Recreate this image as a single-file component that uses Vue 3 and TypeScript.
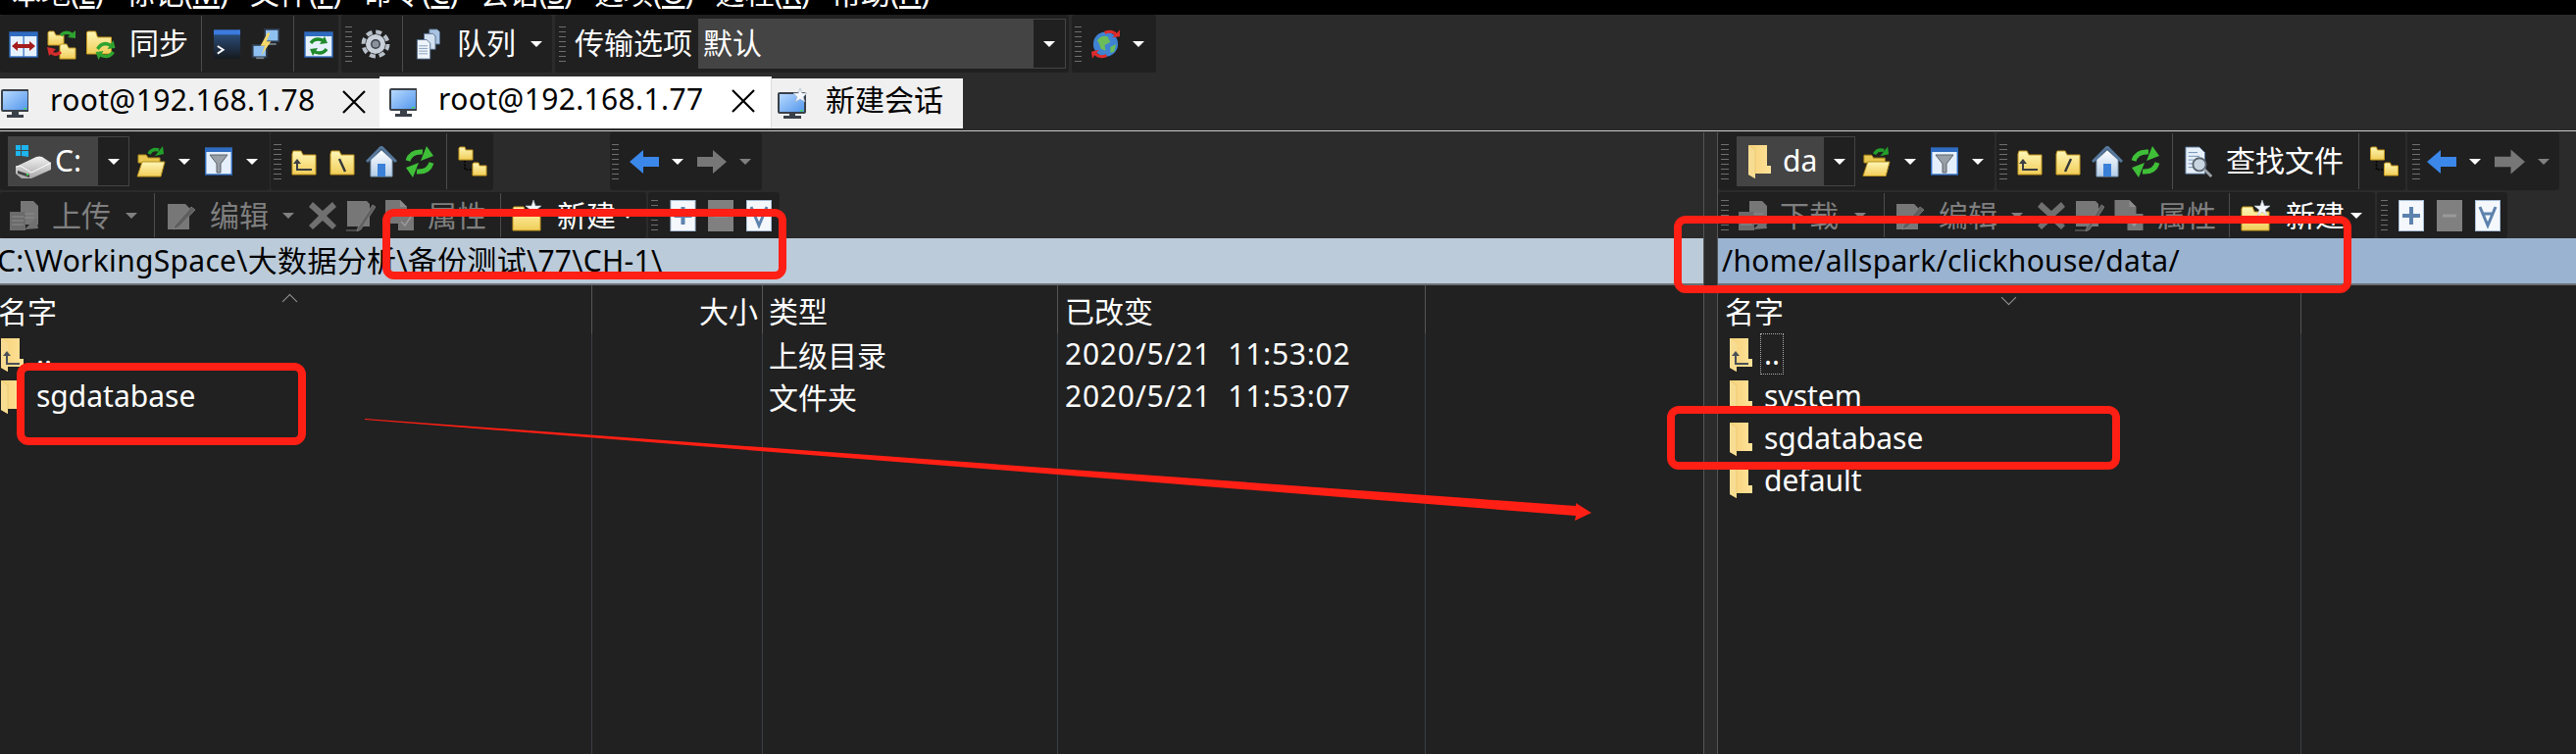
<script setup lang="ts">
type Item = {
  k: 'grip' | 'sep' | 'caret' | 'icon' | 'text' | 'combo'
  m: number
  w?: number
  n?: string
  t?: string
  off?: boolean
  im?: number
  iw?: number
  tm?: number
  light?: number
}
type Band = { m: number; w: number; items: Item[] }

const g = (m: number, w = 7): Item => ({ k: 'grip', m, w })
const s = (m: number): Item => ({ k: 'sep', m, w: 1 })
const c = (m: number, off = false): Item => ({ k: 'caret', m, w: 12, off })
const i = (m: number, n: string, w = 30): Item => ({ k: 'icon', m, n, w })
const t = (m: number, text: string, w: number, off = false): Item => ({ k: 'text', m, t: text, w, off })

const top: Band[] = [
  { m: 0, w: 345, items: [i(9, 'panes'), i(9, 'syncfolders'), i(9, 'syncfolder', 31), t(14, '同步', 59), s(14), i(11, 'term', 29), i(9, 'bolt', 32), s(12), i(10, 'syncpanes')] },
  { m: 3, w: 215, items: [g(4), i(9, 'gear'), s(12), i(12, 'docs', 27), t(16, '队列', 58), c(17)] },
  { m: 3, w: 524, items: [g(4), t(9, '传输选项', 116), { k: 'combo', m: 10, w: 375, light: 341, t: '默认', tm: 5 }] },
  { m: 3, w: 86, items: [g(3), i(10, 'globe', 29), c(13)] },
]
const leftA: Band[] = [
  { m: 0, w: 275, items: [{ k: 'combo', m: 8, w: 124, light: 91, t: 'C:', n: 'drive', im: 7, iw: 37, tm: 4 }, i(7, 'folderopen'), c(13), i(15, 'filter', 28), c(14)] },
  { m: 1, w: 227, items: [g(3, 8), i(10, 'upfolder', 26), i(13, 'rootback', 26), i(11, 'home', 32), i(8, 'refresh'), s(12), i(11, 'tree')] },
  { m: 119, w: 155, items: [g(2), i(11, 'back'), c(13), i(14, 'forward'), c(13, true)] },
]
const leftB: Band[] = [
  { m: 0, w: 659, items: [i(9, 'updoc'), t(14, '上传', 60, true), c(15, true), s(17), i(12, 'edit', 29), t(15, '编辑', 59, true), c(15, true), i(15, 'cross', 28), i(10, 'rename'), i(9, 'prop'), t(14, '属性', 60, true), s(14), i(11, 'newfolder'), t(16, '新建', 60), c(6)] },
  { m: 2, w: 134, items: [g(3), i(12, 'plus', 27), i(12, 'minus', 26), i(13, 'all', 26)] },
]
const rightA: Band[] = [
  { m: 0, w: 282, items: [g(3, 8), { k: 'combo', m: 8, w: 121, light: 88, t: 'da', n: 'wfolder', im: 12, iw: 23, tm: 12 }, i(7, 'folderopen', 29), c(14), i(15, 'filter', 28), c(14)] },
  { m: 2, w: 417, items: [g(3, 8), i(10, 'upfolder', 26), i(13, 'rootslash', 26), i(11, 'home', 32), i(8, 'refresh'), s(12), i(11, 'find', 31), t(12, '查找文件', 120), s(15), i(10, 'tree', 31)] },
  { m: 2, w: 155, items: [g(5, 8), i(7, 'back'), c(13), i(14, 'forward', 31), c(13, true)] },
]
const rightB: Band[] = [
  { m: 0, w: 670, items: [g(3, 8), i(9, 'updoc'), t(13, '下载', 62, true), c(14, true), s(18), i(11, 'edit', 29), t(15, '编辑', 60, true), c(14, true), i(15, 'cross', 28), i(10, 'rename'), i(9, 'prop', 31), t(14, '属性', 60, true), s(13), i(11, 'newfolder'), t(16, '新建', 61), c(5)] },
  { m: 2, w: 133, items: [g(4), i(11, 'plus', 26), i(13, 'minus', 26), i(13, 'all', 26)] },
]
const rows = [
  { name: '..', up: true, type: '上级目录', date: '2020/5/21  11:53:02' },
  { name: 'sgdatabase', up: false, type: '文件夹', date: '2020/5/21  11:53:07' },
]
const remote = [
  { name: '..', up: true },
  { name: 'system', up: false },
  { name: 'sgdatabase', up: false },
  { name: 'default', up: false },
]
const menus = [
  { a: '本地', u: 'L' }, { a: '标记', u: 'M' }, { a: '文件', u: 'F' }, { a: '命令', u: 'C' },
  { a: '会话', u: 'S' }, { a: '选项', u: 'O' }, { a: '远程', u: 'R' }, { a: '帮助', u: 'H' },
]
const rowsOf = (a: Band[], b: Band[]) => [
  { cls: 'tall', bands: a },
  { cls: 'short', bands: b },
]
const panes = [
  { cls: 'local', rows: rowsOf(leftA, leftB) },
  { cls: 'remote', rows: rowsOf(rightA, rightB) },
]
const px = (n?: number) => (n === undefined ? undefined : `${n}px`)
</script>

<template>
  <div class="app">
    <svg class="defs" aria-hidden="true">
      <defs>
        <linearGradient id="fy" x1="0" y1="0" x2="0" y2="1"><stop offset="0" stop-color="#fff7b8" /><stop offset="1" stop-color="#f0cd58" /></linearGradient>
        <linearGradient id="fw" x1="0" y1="0" x2="1" y2="0"><stop offset="0" stop-color="#f5d27a" /><stop offset="1" stop-color="#ffe298" /></linearGradient>
        <linearGradient id="scr" x1="0" y1="0" x2="1" y2="1"><stop offset="0" stop-color="#bcdcff" /><stop offset="1" stop-color="#4f94ec" /></linearGradient>
        <linearGradient id="trm" x1="0" y1="0" x2="0" y2="1"><stop offset="0" stop-color="#2f5688" /><stop offset="1" stop-color="#161a20" /></linearGradient>
        <linearGradient id="hm" x1="0" y1="0" x2="0" y2="1"><stop offset="0" stop-color="#ffffff" /><stop offset="1" stop-color="#b5cde8" /></linearGradient>
        <linearGradient id="dr" x1="0" y1="0" x2="0" y2="1"><stop offset="0" stop-color="#f2f2f2" /><stop offset="1" stop-color="#a8a8a8" /></linearGradient>
      </defs>
      <symbol id="panes" viewBox="0 0 30 30">
        <rect x="1" y="3" width="28" height="25" fill="#e6f1fc" stroke="#2f6cc0" stroke-width="1.4" />
        <rect x="1" y="3" width="28" height="4" fill="#2f6cc0" /><rect x="14.5" y="3" width="1.2" height="25" fill="#2f6cc0" />
        <path d="M3 17 L9 12 V15 H21 V12 L27 17 L21 22 V19 H9 V22Z" fill="#a51c1c" />
      </symbol>
      <symbol id="syncfolders" viewBox="0 0 30 32">
        <path d="M1 4 V17 H17 V7 H9 L7 3 H2Z" fill="url(#fy)" stroke="#c79a1e" />
        <path d="M13 18 V31 H29 V20 H22 L20 16 H14Z" fill="url(#fy)" stroke="#c79a1e" />
        <path d="M14 7 Q19 2 25 6" fill="none" stroke="#2fa32f" stroke-width="3.5" /><path d="M21 9 L29 10 V2Z" fill="#2fa32f" />
        <path d="M14 24 Q8 29 4 24" fill="none" stroke="#d62c2c" stroke-width="3.5" /><path d="M0 19 L9 21 L2 28Z" fill="#d62c2c" />
      </symbol>
      <symbol id="syncfolder" viewBox="0 0 30 32">
        <path d="M1 4 V26 H26 V9 H12 L10 3 H2Z" fill="url(#fy)" stroke="#c79a1e" />
        <path d="M12 21 Q17 13 25 17" fill="none" stroke="#2fa32f" stroke-width="3.5" /><path d="M22 21 L30 20 L28 12Z" fill="#2fa32f" />
        <path d="M28 24 Q23 31 15 27" fill="none" stroke="#2fa32f" stroke-width="3.5" /><path d="M18 23 L10 24 L13 32Z" fill="#2fa32f" />
      </symbol>
      <symbol id="term" viewBox="0 0 30 32">
        <rect x="1" y="1" width="28" height="30" fill="url(#trm)" /><rect x="1" y="1" width="28" height="5" fill="#3b7be0" />
        <path d="M5 18 L11 22 L5 26" fill="none" stroke="#fff" stroke-width="2" />
      </symbol>
      <symbol id="bolt" viewBox="0 0 32 36">
        <rect x="15" y="1" width="16" height="14" fill="#8fc0f2" stroke="#2d3a4c" stroke-width="2" /><rect x="19" y="17" width="9" height="2" fill="#75808c" />
        <rect x="1" y="19" width="16" height="14" fill="#8fc0f2" stroke="#2d3a4c" stroke-width="2" /><rect x="5" y="33" width="9" height="2" fill="#75808c" />
        <path d="M18 5 L10 20 H15 L11 31 L22 15 H17 L21 5Z" fill="#f5d76a" />
      </symbol>
      <symbol id="syncpanes" viewBox="0 0 30 30">
        <rect x="1" y="3" width="28" height="25" fill="#e6f1fc" stroke="#2f6cc0" stroke-width="1.4" />
        <rect x="1" y="3" width="28" height="4" fill="#2f6cc0" />
        <path d="M7 14 Q11 8 19 11" fill="none" stroke="#1f8a2a" stroke-width="3.4" /><path d="M16 15 L24 14 L21 7Z" fill="#1f8a2a" />
        <path d="M23 20 Q19 26 11 23" fill="none" stroke="#1f8a2a" stroke-width="3.4" /><path d="M14 19 L6 20 L9 27Z" fill="#1f8a2a" />
      </symbol>
      <symbol id="gear" viewBox="0 0 30 32">
        <circle cx="15" cy="16" r="12.5" fill="none" stroke="#b8c0ca" stroke-width="4" stroke-dasharray="6 3.8" />
        <circle cx="15" cy="16" r="10" fill="#c9d0d9" /><circle cx="15" cy="16" r="5" fill="#3a3f46" /><circle cx="15" cy="16" r="3.6" fill="#8a929c" />
      </symbol>
      <symbol id="docs" viewBox="0 0 27 36">
        <path d="M15 1 H24 L27 4 V18 H15Z" fill="#a9c3e0" stroke="#4e6a8c" /><path d="M9 6 H19 L22 9 V24 H9Z" fill="#d3e1f0" stroke="#4e6a8c" />
        <path d="M1 13 H12 L16 17 V35 H1Z" fill="#eef4fa" stroke="#4e6a8c" />
        <path d="M3 20 H13 M3 23 H13 M3 26 H13 M3 29 H13" stroke="#7e98b8" />
      </symbol>
      <symbol id="globe" viewBox="0 0 30 32">
        <circle cx="15" cy="16" r="13" fill="#3f83d2" />
        <path d="M6 12 Q11 6 17 8 L20 14 L14 17 L15 23 L10 21 L8 15Z M20 19 L26 16 L24 24 L20 25Z" fill="#6bbd5a" />
        <path d="M14 4 Q22 1 26 6" fill="none" stroke="#e02c2c" stroke-width="3" /><path d="M22 9 L31 8 L30 1Z" fill="#e02c2c" />
        <path d="M16 28 Q8 31 4 26" fill="none" stroke="#e02c2c" stroke-width="3" /><path d="M8 22 L0 24 L1 31Z" fill="#e02c2c" />
      </symbol>
      <symbol id="drive" viewBox="0 0 37 34">
        <path d="M1 0 L6 0 V5 H1Z M7 0 L14 -1 V5 H7Z M1 6 H6 V11 H1Z M7 6 H14 V12 L7 11Z" fill="#1eb4ee" />
        <path d="M1 22 L22 12 Q25 11 28 12 L37 18 V25 L17 34 H7 L1 29Z" fill="url(#dr)" />
        <path d="M1 22 Q6 20 9 23 L17 28 L37 18" fill="none" stroke="#fff" stroke-width="1" />
        <path d="M3 26 L15 30 V33 L3 29Z" fill="#444" /><rect x="12" y="29" width="2" height="2" fill="#3bd04a" />
      </symbol>
      <symbol id="wfolder" viewBox="0 0 23 34" preserveAspectRatio="none">
        <path d="M0 0 H19 V21 H23 V29 H7 V34 L0 30Z" fill="url(#fw)" />
        <path d="M0 0 L7 5 V34 L0 30Z" fill="#f7dc92" /><path d="M7 29 V5 L0 0" fill="none" stroke="#e8c26c" stroke-width=".6" />
      </symbol>
      <symbol id="wfolderup" viewBox="0 0 23 34" preserveAspectRatio="none">
        <path d="M0 0 H19 V21 H23 V29 H7 V34 L0 30Z" fill="url(#fw)" />
        <path d="M0 0 L7 5 V34 L0 30Z" fill="#f7dc92" />
        <path d="M6 17 V26 H19" fill="none" stroke="#4a4f58" stroke-width="2" /><path d="M2 18 L6 13 L10 18Z" fill="#4a4f58" />
      </symbol>
      <symbol id="folderopen" viewBox="0 0 30 32">
        <path d="M2 9 H10 L12 12 H24 V17 H2Z" fill="#e8c850" stroke="#b8901c" />
        <path d="M6 16 H29 L25 31 H1Z" fill="url(#fy)" stroke="#b8901c" />
        <path d="M13 8 Q16 2 23 4" fill="none" stroke="#23a02a" stroke-width="3.6" /><path d="M19 10 L28 8 L27 0Z" fill="#23a02a" />
      </symbol>
      <symbol id="filter" viewBox="0 0 28 30">
        <rect x=".7" y="1" width="26.6" height="27" fill="#e6f0fc" stroke="#2f6cc0" stroke-width="1.4" /><rect x=".7" y="1" width="26.6" height="4" fill="#2f6cc0" />
        <path d="M5 8 H23 L16 17 V26 H12 V17Z" fill="#9aa0a8" stroke="#5d6369" />
      </symbol>
      <symbol id="upfolder" viewBox="0 0 26 30">
        <path d="M1 7 V28 H25 V8 H12 L10 4 H2Z" fill="url(#fy)" stroke="#c79a1e" />
        <path d="M6 16 V23 H21" fill="none" stroke="#3c3f44" stroke-width="2" /><path d="M2 17 L6 12 L10 17Z" fill="#3c3f44" />
      </symbol>
      <symbol id="rootback" viewBox="0 0 26 30">
        <path d="M1 7 V28 H25 V8 H12 L10 4 H2Z" fill="url(#fy)" stroke="#c79a1e" />
        <path d="M10 12 L16 25" fill="none" stroke="#33363a" stroke-width="2.4" />
      </symbol>
      <symbol id="rootslash" viewBox="0 0 26 30">
        <path d="M1 7 V28 H25 V8 H12 L10 4 H2Z" fill="url(#fy)" stroke="#c79a1e" />
        <path d="M16 12 L10 25" fill="none" stroke="#33363a" stroke-width="2.4" />
      </symbol>
      <symbol id="home" viewBox="0 0 32 32">
        <path d="M5 14 V31 H27 V14 L16 4Z" fill="url(#hm)" stroke="#7c9ab8" />
        <path d="M1 16 L16 1 L31 16" fill="none" stroke="#56789c" stroke-width="3" />
        <rect x="12" y="18" width="8" height="13" fill="#3a80d8" />
      </symbol>
      <symbol id="refresh" viewBox="0 0 30 32">
        <path d="M3 15 Q6 5 18 6" fill="none" stroke="#3fbf38" stroke-width="5" /><path d="M16 15 L29 10 L22 0Z" fill="#3fbf38" />
        <path d="M27 17 Q24 27 12 26" fill="none" stroke="#3fbf38" stroke-width="5" /><path d="M14 17 L1 22 L8 32Z" fill="#3fbf38" />
      </symbol>
      <symbol id="tree" viewBox="0 0 30 32">
        <path d="M1 2 V14 H15 V4 H8 L7 1 H2Z" fill="url(#fy)" stroke="#c79a1e" />
        <path d="M15 18 V30 H29 V20 H22 L21 17 H16Z" fill="url(#fy)" stroke="#c79a1e" />
        <path d="M7 15 V24 H14" fill="none" stroke="#000" stroke-width="1.6" stroke-dasharray="2 1.4" />
      </symbol>
      <symbol id="find" viewBox="0 0 31 34">
        <path d="M1 1 H16 L22 7 V30 H1Z" fill="#e6f0fa" stroke="#4e6a8c" />
        <path d="M4 7 H14 M4 11 H16 M4 15 H10 M4 19 H9 M4 23 H10" stroke="#6f8cb0" />
        <circle cx="16" cy="20" r="7" fill="#c9d6e2" stroke="#5b6570" stroke-width="2" /><path d="M21 25 L29 33" stroke="#9aa2aa" stroke-width="3" />
      </symbol>
      <symbol id="back" viewBox="0 0 30 30"><path d="M0 15 L14 3 V10 H30 V20 H14 V27Z" fill="#3b87ea" /></symbol>
      <symbol id="forward" viewBox="0 0 30 30"><path d="M30 15 L16 3 V10 H0 V20 H16 V27Z" fill="#777" /></symbol>
      <symbol id="updoc" viewBox="0 0 30 32">
        <path d="M12 1 H25 L30 6 V25 H12Z" fill="#777" /><path d="M1 12 H17 V31 H1Z" fill="#6b6b6b" />
        <path d="M16 14 H26 M16 18 H26 M3 17 H15 M3 21 H15 M3 25 H15" stroke="#8c8c8c" />
        <path d="M16 30 L28 18 L30 29 Z" fill="#707070" />
      </symbol>
      <symbol id="edit" viewBox="0 0 29 30">
        <path d="M1 3 H19 L23 7 V29 H1Z" fill="#777" />
        <path d="M8 25 L25 6 L29 9 L12 27 L7 29Z" fill="#5f5f5f" stroke="#8a8a8a" stroke-width=".7" />
      </symbol>
      <symbol id="cross" viewBox="0 0 28 30">
        <path d="M4 1 L14 10 L24 1 L28 6 L18 15 L28 25 L24 29 L14 20 L4 29 L0 25 L10 15 L0 6Z" fill="#707070" />
      </symbol>
      <symbol id="rename" viewBox="0 0 30 32">
        <path d="M1 1 H21 L24 4 V27 H1Z" fill="#777" />
        <path d="M12 28 L27 5 L30 7 L15 30 L11 32Z" fill="#606060" stroke="#8a8a8a" stroke-width=".7" /><path d="M0 31 H12" stroke="#777" />
      </symbol>
      <symbol id="prop" viewBox="0 0 30 32">
        <path d="M1 0 H16 L23 7 V14 H30 V31 H14 V24 H1Z" fill="#777" />
        <path d="M17 22 L21 26 L27 17" fill="none" stroke="#999" stroke-width="1.6" /><path d="M16 0 V7 H23" fill="#8c8c8c" />
      </symbol>
      <symbol id="newfolder" viewBox="0 0 30 32">
        <path d="M1 9 V31 H29 V12 H14 L12 7 H2Z" fill="url(#fy)" stroke="#c79a1e" />
        <path d="M22 0 L24 6 L30 6 L25 10 L27 16 L22 12 L17 16 L19 10 L14 6 L20 6Z" fill="#f4f7fb" stroke="#b7c6da" stroke-width=".6" />
      </symbol>
      <symbol id="plus" viewBox="0 0 26 32"><rect x=".5" y=".5" width="25" height="31" fill="#f4f8fc" stroke="#a9bfd8" /><path d="M13 7 V25 M4 16 H22" stroke="#5d82ad" stroke-width="4" /></symbol>
      <symbol id="minus" viewBox="0 0 26 32"><rect width="26" height="32" fill="#808080" /><path d="M6 16 H20" stroke="#999" stroke-width="3" /></symbol>
      <symbol id="all" viewBox="0 0 26 32"><rect x=".5" y=".5" width="25" height="31" fill="#f4f8fc" stroke="#a9bfd8" /><path d="M5 7 L13 26 L21 7 M8 14 H18" fill="none" stroke="#5d82ad" stroke-width="3" /></symbol>
      <symbol id="monitor" viewBox="0 0 28 30">
        <rect x="1" y="1" width="27" height="21" rx="1" fill="url(#scr)" stroke="#3a4048" stroke-width="2" />
        <rect x="23" y="19" width="3" height="1.5" fill="#47d65a" />
        <rect x="11" y="23" width="7" height="3" fill="#3a4048" /><rect x="6" y="26" width="17" height="3" fill="#3a4048" />
      </symbol>
      <symbol id="monitornew" viewBox="0 0 30 32">
        <rect x="1" y="5" width="27" height="20" rx="1" fill="url(#scr)" stroke="#3a4048" stroke-width="2" />
        <rect x="23" y="22" width="3" height="1.5" fill="#47d65a" />
        <rect x="12" y="26" width="6" height="2" fill="#3a4048" /><rect x="6" y="28" width="18" height="3" fill="#3a4048" />
        <path d="M23 0 L25 5 L30 5 L26 9 L28 14 L23 11 L18 14 L20 9 L16 5 L21 5Z" fill="#f4f7fb" stroke="#9fb0c4" stroke-width=".6" />
      </symbol>
      <symbol id="close" viewBox="0 0 24 24"><path d="M1 1 L23 23 M23 1 L1 23" fill="none" stroke="#000" stroke-width="2.2" /></symbol>
    </svg>

    <div class="menu"><div class="menu-in"><span v-for="m in menus" :key="m.u">{{ m.a }}(<u>{{ m.u }}</u>)</span></div></div>

    <div class="band-row top">
      <div v-for="(b, bi) in top" :key="bi" class="band" :style="{ marginLeft: px(b.m), width: px(b.w) }">
        <template v-for="(it, ii) in b.items" :key="ii">
          <span v-if="it.k === 'grip'" class="grip" :style="{ marginLeft: px(it.m), width: px(it.w) }"></span>
          <span v-else-if="it.k === 'sep'" class="sep" :style="{ marginLeft: px(it.m) }"></span>
          <span v-else-if="it.k === 'caret'" class="caret" :class="{ off: it.off }" :style="{ marginLeft: px(it.m) }"></span>
          <svg v-else-if="it.k === 'icon'" class="ic" :style="{ marginLeft: px(it.m), width: px(it.w) }"><use :href="'#' + it.n" /></svg>
          <span v-else-if="it.k === 'text'" class="tx" :class="{ off: it.off }" :style="{ marginLeft: px(it.m), width: px(it.w) }">{{ it.t }}</span>
          <div v-else class="combo" :style="{ marginLeft: px(it.m), width: px(it.w) }">
            <div class="combo-main" :style="{ width: px(it.light) }"><span class="tx" :style="{ marginLeft: px(it.tm) }">{{ it.t }}</span></div>
            <div class="combo-drop"><span class="caret"></span></div>
          </div>
        </template>
      </div>
    </div>

    <div class="tabs">
      <div class="tab t1"><svg class="mon"><use href="#monitor" /></svg><span class="tab-t">root@192.168.1.78</span><svg class="x"><use href="#close" /></svg></div>
      <div class="tab t2"><svg class="mon"><use href="#monitor" /></svg><span class="tab-t">root@192.168.1.77</span><svg class="x"><use href="#close" /></svg></div>
      <div class="tab t3"><svg class="mon new"><use href="#monitornew" /></svg><span class="tab-t">新建会话</span></div>
    </div>
    <div class="rule"></div>

    <div class="split">
      <section v-for="p in panes" :key="p.cls" class="pane" :class="p.cls">
        <div v-for="r in p.rows" :key="r.cls" class="band-row" :class="r.cls">
          <div v-for="(b, bi) in r.bands" :key="bi" class="band" :style="{ marginLeft: px(b.m), width: px(b.w) }">
            <template v-for="(it, ii) in b.items" :key="ii">
              <span v-if="it.k === 'grip'" class="grip" :style="{ marginLeft: px(it.m), width: px(it.w) }"></span>
              <span v-else-if="it.k === 'sep'" class="sep" :style="{ marginLeft: px(it.m) }"></span>
              <span v-else-if="it.k === 'caret'" class="caret" :class="{ off: it.off }" :style="{ marginLeft: px(it.m) }"></span>
              <svg v-else-if="it.k === 'icon'" class="ic" :style="{ marginLeft: px(it.m), width: px(it.w) }"><use :href="'#' + it.n" /></svg>
              <span v-else-if="it.k === 'text'" class="tx" :class="{ off: it.off }" :style="{ marginLeft: px(it.m), width: px(it.w) }">{{ it.t }}</span>
              <div v-else class="combo" :style="{ marginLeft: px(it.m), width: px(it.w) }">
                <div class="combo-main" :style="{ width: px(it.light) }">
                  <svg class="ic combo-ic" :style="{ marginLeft: px(it.im), width: px(it.iw) }"><use :href="'#' + it.n" /></svg>
                  <span class="tx" :style="{ marginLeft: px(it.tm) }">{{ it.t }}</span>
                </div>
                <div class="combo-drop"><span class="caret"></span></div>
              </div>
            </template>
          </div>
        </div>

        <template v-if="p.cls === 'local'">
          <div class="path"><span class="path-t">C:\WorkingSpace\大数据分析\备份测试\77\CH-1\</span></div>
          <div class="thead">
            <div class="col c-name"><span class="hname">名字</span><i class="chev up"></i></div>
            <div class="col c-size"><span>大小</span></div>
            <div class="col c-type"><span>类型</span></div>
            <div class="col c-date"><span>已改变</span></div>
            <div class="col c-rest"></div>
          </div>
          <div class="tbody">
            <div class="rowlines">
              <div class="col c-name"></div><div class="col c-size"></div><div class="col c-type"></div><div class="col c-date"></div>
            </div>
            <div v-for="r in rows" :key="r.name" class="row">
              <div class="cell c-name">
                <svg class="fold"><use :href="r.up ? '#wfolderup' : '#wfolder'" /></svg><span class="nm">{{ r.name }}</span>
              </div>
              <div class="cell c-size"></div>
              <div class="cell c-type">{{ r.type }}</div>
              <div class="cell c-date"><span class="date">{{ r.date }}</span></div>
            </div>
          </div>
        </template>

        <template v-else>
          <div class="path"><span class="path-t">/home/allspark/clickhouse/data/</span></div>
          <div class="thead">
            <div class="col c-rname"><span>名字</span><i class="chev down"></i></div>
            <div class="col c-rest"></div>
          </div>
          <div class="tbody">
            <div class="rowlines"><div class="col c-rname"></div></div>
            <div v-for="r in remote" :key="r.name" class="row">
              <div class="cell c-rname">
                <svg class="fold"><use :href="r.up ? '#wfolderup' : '#wfolder'" /></svg><span class="nm" :class="{ focus: r.up }">{{ r.name }}</span>
              </div>
            </div>
          </div>
        </template>
      </section>
    </div>

    <div class="mark m1"></div>
    <div class="mark m2"></div>
    <div class="mark m3"></div>
    <div class="mark m4"></div>
    <svg class="arrow" viewBox="0 0 2627 769"><polygon points="372,427 1607,516 1607,513 1623,523 1606,531 1607,526 372,428" fill="#ff1f14" /></svg>
  </div>
</template>

<style>
html, body { margin: 0; background: #2b2b2b; overflow: hidden; }
</style>

<style scoped>
.app {
  position: relative;
  width: 2627px;
  height: 769px;
  overflow: hidden;
  background: #2b2b2b;
  color: #fff;
  font-family: "Noto Sans", "Noto Sans CJK SC", sans-serif;
  font-size: 30px;
}
.defs { position: absolute; width: 0; height: 0; }
.menu { height: 15px; background: #000; overflow: hidden; }
.menu-in { display: flex; gap: 22px; padding-left: 12px; margin-top: -27px; font-size: 30px; line-height: 40px; white-space: nowrap; }
.band-row { display: flex; }
.band-row.top { height: 59px; }
.band-row.tall { height: 59px; margin-bottom: 2px; }
.band-row.short { height: 47px; }
.band { display: flex; align-items: center; background: #202020; border-radius: 3px; flex: none; box-sizing: border-box; }
.grip { flex: none; height: 36px; background: repeating-linear-gradient(#6e6e6e 0 1px, transparent 1px 5px); }
.short .grip { height: 31px; }
.sep { flex: none; width: 1px; align-self: stretch; margin: 1px 0; background: #4c4c4c; }
.caret { flex: none; width: 0; height: 0; border-left: 6px solid transparent; border-right: 6px solid transparent; border-top: 6px solid #fff; }
.caret.off { border-top-color: #808080; }
.ic { flex: none; height: 32px; display: block; }
.tx { flex: none; white-space: nowrap; line-height: 40px; margin-bottom: 2px; }
.tx.off { color: #7f7f7f; }
.short .tx { margin-bottom: 0; }
.short .ic { height: 32px; }
.combo { flex: none; display: flex; height: 51px; box-sizing: border-box; }
.combo-main { flex: none; display: flex; align-items: center; background: #444; }
.combo-ic { height: 34px; }
.combo-drop { flex: 1; display: flex; align-items: center; justify-content: center; border: 1px solid #444; background: #202020; }
.tabs { display: flex; align-items: flex-end; height: 53px; margin-top: 4px; color: #000; }
.tab { flex: none; display: flex; align-items: center; box-sizing: border-box; height: 51px; background: #f0f0f0; }
.t1 { width: 387px; }
.t2 { width: 400px; height: 53px; background: #fff; border-right: 1px solid #ddd; }
.t3 { width: 195px; }
.mon { flex: none; width: 28px; height: 30px; margin-left: 1px; }
.t2 .mon { margin-left: 10px; }
.mon.new { width: 30px; height: 32px; margin-left: 6px; }
.tab-t { flex: none; white-space: nowrap; margin-left: 22px; margin-bottom: 7px; line-height: 46px; letter-spacing: .35px; }
.t2 .tab-t { margin-left: 22px; }
.t3 .tab-t { margin-left: 19px; letter-spacing: 0; }
.x { flex: none; width: 24px; height: 24px; margin-left: auto; margin-right: 14px; margin-bottom: 4px; }
.t2 .x { margin-right: 16px; }
.rule { height: 1px; margin: 2px 0 1px; background: #c8c8c8; }
.split { display: flex; height: 634px; }
.pane { display: flex; flex-direction: column; flex: none; }
.pane.local { width: 1737px; border-right: 1px solid #555; }
.pane.remote { margin-left: 13px; border-left: 1px solid #555; width: 875px; }
.path { height: 46px; flex: none; display: flex; align-items: center; color: #000; border-bottom: 2px solid #6a6f75; overflow: hidden; }
.local .path { background: #bccbd9; }
.remote .path { background: #9ab3d0; }
.local .path-t { margin-left: -3px; }
.remote .path-t { margin-left: 4px; }
.path-t { white-space: nowrap; line-height: 44px; letter-spacing: .3px; }
.thead { display: flex; height: 49px; flex: none; background: #212121; }
.col { flex: none; box-sizing: border-box; height: 100%; display: flex; align-items: center; border-right: 1px solid #555; }
.tbody { flex: 1; position: relative; background: #212121; }
.rowlines { position: absolute; inset: 0; display: flex; }
.rowlines .col { border-right-color: #3b4047; }
.c-name { width: 604px; }
.c-size { width: 174px; justify-content: flex-end; padding-right: 4px; }
.c-type { width: 301px; padding-left: 6px; }
.c-date { width: 375px; padding-left: 7px; }
.c-rest { flex: 1; border-right: 0; }
.c-rname { width: 595px; padding-left: 7px; }
.hname { margin-left: -2px; }
.chev { flex: none; display: block; width: 10px; height: 10px; border-left: 1px solid #999; border-top: 1px solid #999; }
.chev.up { margin: -16px 0 0 232px; transform: rotate(45deg); }
.chev.down { margin: -24px 0 0 224px; transform: rotate(225deg); }
.row { position: relative; display: flex; height: 43px; }
.cell { flex: none; box-sizing: border-box; display: flex; align-items: center; white-space: pre; padding-bottom: 2px; }
.fold { flex: none; width: 23px; height: 34px; margin: 2px 0 0 1px; }
.c-rname.cell .fold { margin-left: 5px; }
.nm { margin-left: 13px; line-height: 40px; }
.c-rname .nm { margin-left: 12px; }
.nm.focus { outline: 1px dotted #aaa; outline-offset: 0; padding: 0 3px; margin-left: 9px; }
.date { letter-spacing: .75px; }
.mark { position: absolute; box-sizing: border-box; border: 8px solid #ff1f14; border-radius: 12px; }
.m1 { left: 390px; top: 213px; width: 412px; height: 72px; }
.m2 { left: 1707px; top: 220px; width: 691px; height: 79px; }
.m3 { left: 17px; top: 370px; width: 295px; height: 84px; }
.m4 { left: 1700px; top: 414px; width: 462px; height: 65px; }
.arrow { position: absolute; left: 0; top: 0; width: 2627px; height: 769px; pointer-events: none; }
</style>
